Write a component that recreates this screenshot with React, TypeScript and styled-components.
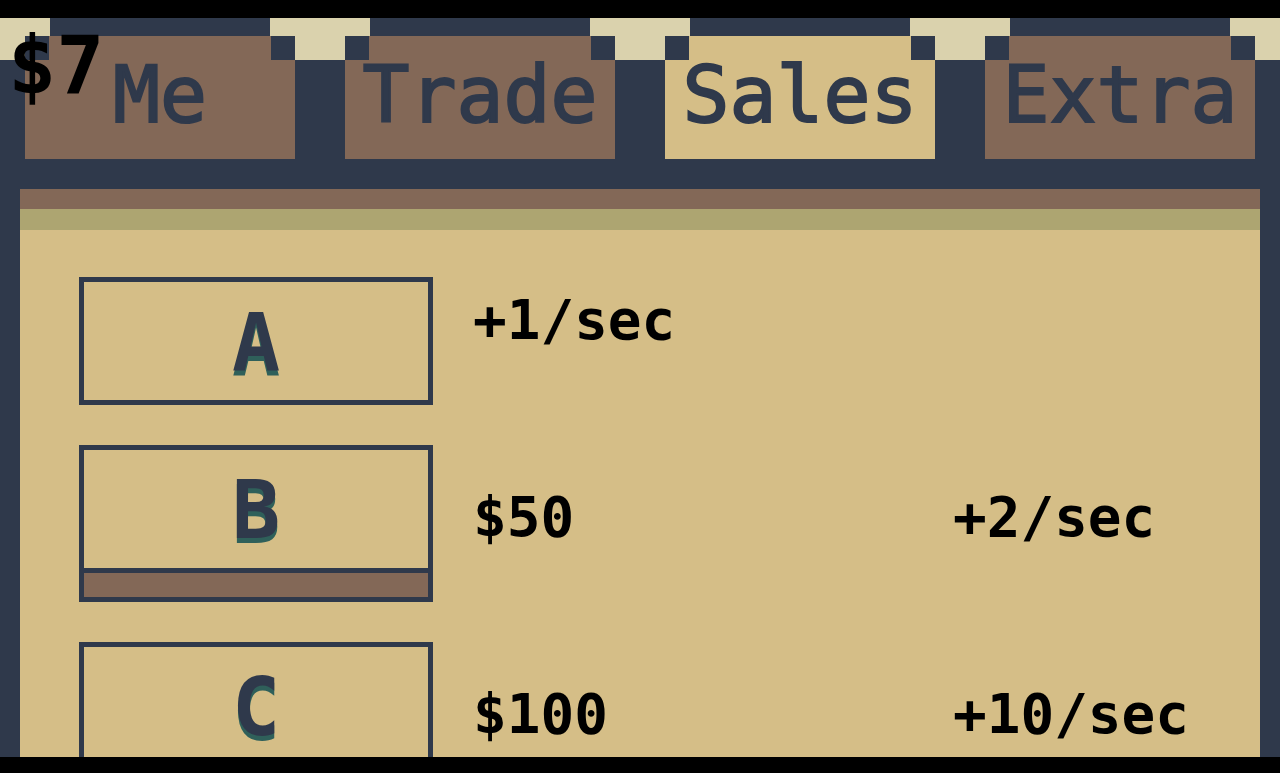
import React, { useState } from "react";
import styled, { createGlobalStyle, css } from "styled-components";

const navy = "#2f394b";
const brown = "#836857";
const tan = "#d5be87";
const cream = "#dad2ad";
const olive = "#ada571";
const green = "#2f605a";

const GlobalStyle = createGlobalStyle`
  * { box-sizing: border-box; }
  body {
    margin: 0;
    background: #000;
    font-family: "DejaVu Sans Mono", monospace;
    font-weight: 700;
  }
`;

const Screen = styled.div`
  display: flex;
  flex-direction: column;
  height: 100vh;
  padding: 18px 0 16px;
  background: #000;
`;

const Game = styled.main`
  position: relative;
  flex: 1;
  min-height: 0;
  display: flex;
  flex-direction: column;
  overflow: hidden;
  background: ${navy};
`;

const Money = styled.output`
  position: absolute;
  top: 6px;
  left: 8px;
  font-size: 80px;
  line-height: 84px;
  color: #000;
  pointer-events: none;
`;

const Tabs = styled.nav`
  flex: none;
  display: grid;
  grid-template-columns: repeat(4, 1fr);
  background: linear-gradient(${cream} 42px, ${navy} 42px);
`;

const TabSlot = styled.div`
  padding: 18px 25px 30px;
  background: linear-gradient(${navy}, ${navy}) center top / calc(100% - 100px)
    18px no-repeat;
`;

const Tab = styled.button<{ $active: boolean }>`
  display: block;
  width: 100%;
  height: 123px;
  padding: 0 0 6px;
  border: 0;
  color: ${navy};
  font: inherit;
  font-weight: 400;
  font-size: 78px;
  line-height: 116px;
  -webkit-text-stroke: 2px ${navy};
  white-space: nowrap;
  cursor: pointer;
  background:
    linear-gradient(${navy}, ${navy}) left top / 24px 24px no-repeat,
    linear-gradient(${navy}, ${navy}) right top / 24px 24px no-repeat,
    ${(p) => (p.$active ? tan : brown)};
`;

const Panel = styled.section`
  flex: 1;
  min-height: 0;
  margin: 0 20px;
  overflow: hidden;
  background: ${tan};
  border-top: 20px solid ${brown};
`;

const Offers = styled.ul`
  display: flex;
  flex-direction: column;
  gap: 40px;
  margin: 0;
  padding: 47px 0 40px 59px;
  list-style: none;
  border-top: 21px solid ${olive};
`;

const Offer = styled.li<{ $owned: boolean }>`
  display: grid;
  grid-template-columns: 354px 1fr 307px;
  align-items: start;
  ${(p) =>
    p.$owned
      ? css`
          --text-top: 13px;
        `
      : css`
          --text-top: 42px;
        `}
`;

const Card = styled.button`
  display: flex;
  flex-direction: column;
  padding: 0;
  border: 5px solid ${navy};
  background: ${tan};
  color: ${navy};
  font: inherit;
  cursor: pointer;
`;

const CardLetter = styled.span`
  width: 100%;
  height: 118px;
  font-size: 80px;
  line-height: 122px;
  text-align: center;
  text-shadow: 0 5px ${green};
`;

const CardBar = styled.span`
  width: 100%;
  height: 29px;
  border-top: 5px solid ${navy};
  background: ${brown};
`;

const Figure = styled.span`
  padding: var(--text-top) 0 0 40px;
  font-size: 56px;
  line-height: 60px;
  color: #000;
  white-space: nowrap;
`;

const Rate = styled(Figure)`
  padding-left: 0;
`;

const tabs = ["Me", "Trade", "Sales", "Extra"];

const offers = [
  { letter: "A", rate: "+1/sec" },
  { letter: "B", price: "$50", rate: "+2/sec" },
  { letter: "C", price: "$100", rate: "+10/sec" },
];

export default function App() {
  const [active, setActive] = useState("Sales");

  return (
    <Screen>
      <GlobalStyle />
      <Game>
        <Tabs aria-label="Sections">
          {tabs.map((name) => (
            <TabSlot key={name}>
              <Tab
                type="button"
                $active={name === active}
                aria-pressed={name === active}
                onClick={() => setActive(name)}
              >
                {name}
              </Tab>
            </TabSlot>
          ))}
        </Tabs>
        <Panel>
          <Offers>
            {offers.map(({ letter, price, rate }) => (
              <Offer key={letter} $owned={!price}>
                <Card type="button">
                  <CardLetter>{letter}</CardLetter>
                  {price && <CardBar />}
                </Card>
                <Figure>{price ?? rate}</Figure>
                {price && <Rate>{rate}</Rate>}
              </Offer>
            ))}
          </Offers>
        </Panel>
        <Money>$7</Money>
      </Game>
    </Screen>
  );
}
